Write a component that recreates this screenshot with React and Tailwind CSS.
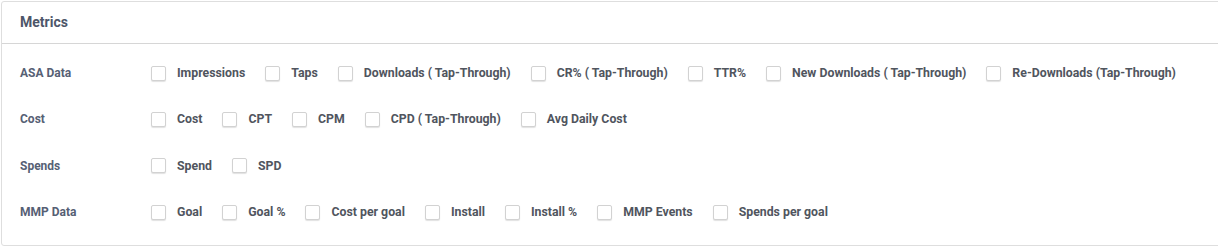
import React from "react";

const rows = [
  { label: "ASA Data", items: ["Impressions", "Taps", "Downloads ( Tap-Through)", "CR% ( Tap-Through)", "TTR%", "New Downloads ( Tap-Through)", "Re-Downloads (Tap-Through)"] },
  { label: "Cost", items: ["Cost", "CPT", "CPM", "CPD ( Tap-Through)", "Avg Daily Cost"] },
  { label: "Spends", items: ["Spend", "SPD"] },
  { label: "MMP Data", items: ["Goal", "Goal %", "Cost per goal", "Install", "Install %", "MMP Events", "Spends per goal"] },
];

export default function App() {
  return (
    <div className="w-[1218px] h-[246px] overflow-hidden bg-white" style={{ fontFamily: "Roboto, 'Liberation Sans', sans-serif" }}>
      <div className="ml-px mt-px w-[1222px] border border-[#dedede] rounded-[3px] bg-white">
        <div className="h-[42px] border-b border-[#d6d6d6] flex items-center pl-[18px]">
          <span className="text-[14px] font-bold text-[#4d5669]">Metrics</span>
        </div>
        <div className="pt-[6px] pb-[10px]">
          {rows.map((r) => (
            <div key={r.label} className="h-[46.33px] flex items-center">
              <div className="w-[149px] pl-[18px] text-[12px] font-bold text-[#566074]">{r.label}</div>
              <div className="flex items-center">
                {r.items.map((it) => (
                  <label key={it} className="flex items-center mr-[20px]">
                    <span className="w-[15px] h-[15px] rounded-[2px] border border-[#d2d2d2] bg-white shadow-[0_1px_1px_rgba(0,0,0,0.12)] mr-[11px]" />
                    <span className="text-[12.3px] font-bold text-[#50555e]">{it}</span>
                  </label>
                ))}
              </div>
            </div>
          ))}
        </div>
      </div>
    </div>
  );
}
